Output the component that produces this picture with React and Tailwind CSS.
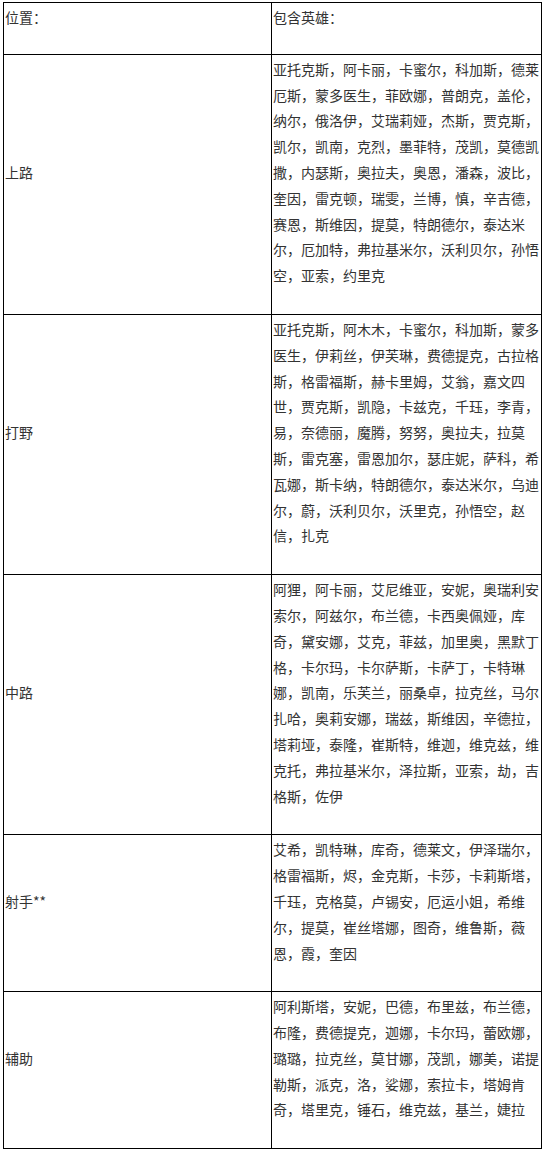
import React from 'react';

const rows = [
  {
    pos: '上路',
    heroes:
      '亚托克斯，阿卡丽，卡蜜尔，科加斯，德莱厄斯，蒙多医生，菲欧娜，普朗克，盖伦，纳尔，俄洛伊，艾瑞莉娅，杰斯，贾克斯，凯尔，凯南，克烈，墨菲特，茂凯，莫德凯撒，内瑟斯，奥拉夫，奥恩，潘森，波比，奎因，雷克顿，瑞雯，兰博，慎，辛吉德，赛恩，斯维因，提莫，特朗德尔，泰达米尔，厄加特，弗拉基米尔，沃利贝尔，孙悟空，亚索，约里克'
  },
  {
    pos: '打野',
    heroes:
      '亚托克斯，阿木木，卡蜜尔，科加斯，蒙多医生，伊莉丝，伊芙琳，费德提克，古拉格斯，格雷福斯，赫卡里姆，艾翁，嘉文四世，贾克斯，凯隐，卡兹克，千珏，李青，易，奈德丽，魔腾，努努，奥拉夫，拉莫斯，雷克塞，雷恩加尔，瑟庄妮，萨科，希瓦娜，斯卡纳，特朗德尔，泰达米尔，乌迪尔，蔚，沃利贝尔，沃里克，孙悟空，赵信，扎克'
  },
  {
    pos: '中路',
    heroes:
      '阿狸，阿卡丽，艾尼维亚，安妮，奥瑞利安索尔，阿兹尔，布兰德，卡西奥佩娅，库奇，黛安娜，艾克，菲兹，加里奥，黑默丁格，卡尔玛，卡尔萨斯，卡萨丁，卡特琳娜，凯南，乐芙兰，丽桑卓，拉克丝，马尔扎哈，奥莉安娜，瑞兹，斯维因，辛德拉，塔莉垭，泰隆，崔斯特，维迦，维克兹，维克托，弗拉基米尔，泽拉斯，亚索，劫，吉格斯，佐伊'
  },
  {
    pos: '射手**',
    heroes:
      '艾希，凯特琳，库奇，德莱文，伊泽瑞尔，格雷福斯，烬，金克斯，卡莎，卡莉斯塔，千珏，克格莫，卢锡安，厄运小姐，希维尔，提莫，崔丝塔娜，图奇，维鲁斯，薇恩，霞，奎因'
  },
  {
    pos: '辅助',
    heroes:
      '阿利斯塔，安妮，巴德，布里兹，布兰德，布隆，费德提克，迦娜，卡尔玛，蕾欧娜，璐璐，拉克丝，莫甘娜，茂凯，娜美，诺提勒斯，派克，洛，娑娜，索拉卡，塔姆肯奇，塔里克，锤石，维克兹，基兰，婕拉'
  }
];

// shared cell look: text sits near the top, blank space below
const cell =
  'border border-black px-px pt-[2px] pb-[25px] align-middle leading-[25.8px]';
const headCell =
  'border border-black px-px pt-[2px] pb-[23px] align-middle leading-[25.8px]';

const App = () => {
  return (
    <div className="min-h-screen bg-white pt-[2px] pl-[3px] text-[14px] text-[#333] font-['Noto_Sans_CJK_SC','Noto_Sans',sans-serif]">
      <table className="w-[539px] table-fixed border-collapse">
        <colgroup>
          <col className="w-[268px]" />
          <col />
        </colgroup>
        <tbody>
          <tr>
            <td className={headCell}>位置：</td>
            <td className={headCell}>包含英雄：</td>
          </tr>
          {rows.map(row => (
            <tr key={row.pos}>
              <td className={cell}>{row.pos}</td>
              <td className={cell}>{row.heroes}</td>
            </tr>
          ))}
        </tbody>
      </table>
    </div>
  );
};

export default App;
